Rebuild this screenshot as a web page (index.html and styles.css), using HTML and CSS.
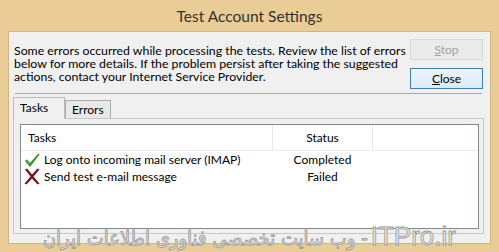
FILE: index.html
```html
<!DOCTYPE html>
<html>
<head>
<meta charset="utf-8">
<link rel="stylesheet" href="styles.css">
</head>
<body>
<div class="window">
  <div class="titlebar">Test Account Settings</div>
  <div class="content">
    <div class="top">
      <div class="message">
        <div class="line">Some errors occurred while processing the tests. Review the list of errors</div>
        <div class="line">below for more details. If the problem persist after taking the suggested</div>
        <div class="line">actions, contact your Internet Service Provider.</div>
      </div>
      <div class="buttons">
        <button class="btn disabled"><u>S</u>top</button>
        <button class="btn default"><u>C</u>lose</button>
      </div>
    </div>
    <div class="sep"></div>
    <div class="tabs">
      <div class="tab active">Tasks</div>
      <div class="tab">Errors</div>
    </div>
    <div class="panel">
      <div class="list">
        <div class="row header">
          <div class="c1 hcell">Tasks</div>
          <div class="c2 hcell">Status</div>
          <div class="c3 hcell"></div>
        </div>
        <div class="row item">
          <div class="c1 task">
            <svg class="ico" width="16" height="16" viewBox="0 0 16 16"><path d="M1 9 L3 7.5 L6 11 L14.5 1.5 L15.5 2.5 L6 15 Z" fill="#2e8b2e"/><path d="M1 9 L3 7.5 L6 11 L14.5 1.5 L6 13 Z" fill="#4caf3c"/></svg>
            <span>Log onto incoming mail server (IMAP)</span>
          </div>
          <div class="c2 status">Completed</div>
        </div>
        <div class="row item">
          <div class="c1 task">
            <svg class="ico" width="16" height="17" viewBox="0 0 16 17"><path d="M1 1.5 L3 0.5 L8 6.5 L13.5 0.5 L15.5 1.5 L9.5 8.5 L15.5 15.5 L13.5 16.5 L8 10.5 L2.5 16.5 L0.5 15.5 L6.5 8.5 Z" fill="#7a1420"/></svg>
            <span>Send test e-mail message</span>
          </div>
          <div class="c2 status">Failed</div>
        </div>
      </div>
    </div>
  </div>
  <div class="watermark" dir="rtl"><span class="wm-latin">ITPro.ir</span> <span class="wm-fa">- وب سایت تخصصی فناوری اطلاعات ایران</span></div>
</div>
</body>
</html>
```
FILE: styles.css
```css
* { box-sizing: border-box; }
html, body { margin: 0; padding: 0; }
body {
  background: #e9cc96;
  font-family: "Lato", "Noto Sans", sans-serif;
  font-size: 12px;
  color: #000;
}
.window {
  position: relative;
  width: 499px;
  height: 252px;
  background: #e9cc96;
  display: flex;
  flex-direction: column;
  overflow: hidden;
}
.titlebar {
  height: 31px;
  display: flex;
  align-items: center;
  justify-content: center;
  font-size: 15.5px;
  color: #333;
  padding-top: 1px;
}
.content {
  margin: 0 8px 8px 8px;
  flex: 1;
  background: #f0f0f0;
  border: 1px solid #d2b47f;
  padding: 0 7px 0 5px;
  display: flex;
  flex-direction: column;
}
.top {
  display: flex;
  justify-content: space-between;
  align-items: flex-start;
  padding-top: 7px;
}
.message {
  margin-top: 5px;
  font-size: 12.3px;
  white-space: nowrap;
}
.line {
  height: 13px;
  line-height: 13px;
}
.buttons {
  display: flex;
  flex-direction: column;
  gap: 8px;
}
.btn {
  width: 73px;
  height: 21px;
  font-family: inherit;
  font-size: 12px;
  padding: 0;
  border: 1px solid #adadad;
  background: #e5e5e5;
  line-height: 17px;
}
.btn.disabled {
  color: #a3a3a3;
  border-color: #d9d9d9;
  background: #eaeaea;
}
.btn.default {
  border-color: #3c7fb1;
  background: linear-gradient(#ecf4fc, #dcecfc);
  color: #000;
}
.sep {
  height: 1px;
  background: #a9a9a9;
  margin: 4px 1px 0 1px;
}
.tabs {
  display: flex;
  align-items: flex-end;
  height: 24px;
  position: relative;
  z-index: 1;
}
.tab {
  height: 18px;
  padding: 0 6px;
  border: 1px solid #acacac;
  border-bottom: none;
  background: #e8e8e8;
  line-height: 17px;
}
.tab.active {
  height: 22px;
  width: 52px;
  background: #f0f0f0;
  border-color: #b9b9b9;
  padding-left: 6px;
  line-height: 19px;
  margin-bottom: -1px;
  margin-left: -1px;
}
.panel {
  height: 116px;
  margin-left: -1px;
  margin-right: -1px;
  border: 1px solid #c8c8c8;
  padding: 5px 4px 0 6px;
}
.list {
  height: 105px;
  background: #fff;
  border: 1px solid #828790;
}
.row { display: flex; }
.header {
  height: 26px;
  border-bottom: 1px solid #ebebeb;
}
.hcell {
  display: flex;
  align-items: center;
}
.c1 { width: 251px; padding-left: 7px; }
.c2 { width: 100px; justify-content: center; text-align: center; border-left: 1px solid #e6e6e6; }
.header .c3 { flex: 1; border-left: 1px solid #e6e6e6; }
.item { height: 17px; align-items: center; }
.item .c2 { border-left-color: transparent; }
.task { display: flex; align-items: center; padding-left: 3px; gap: 4px; }
.ico { flex: none; }
.watermark {
  position: absolute;
  left: 20px;
  width: 436px;
  top: 222px;
  line-height: 28px;
  color: #e6e6e6;
  -webkit-text-stroke: 0.8px #9a9a9a;
  white-space: nowrap;
  text-align: right;
}
.wm-latin {
  font-family: "Liberation Sans", sans-serif;
  font-size: 26px;
}
.wm-fa {
  font-family: "DejaVu Sans Condensed", "DejaVu Sans", sans-serif;
  font-size: 20px;
}
```
